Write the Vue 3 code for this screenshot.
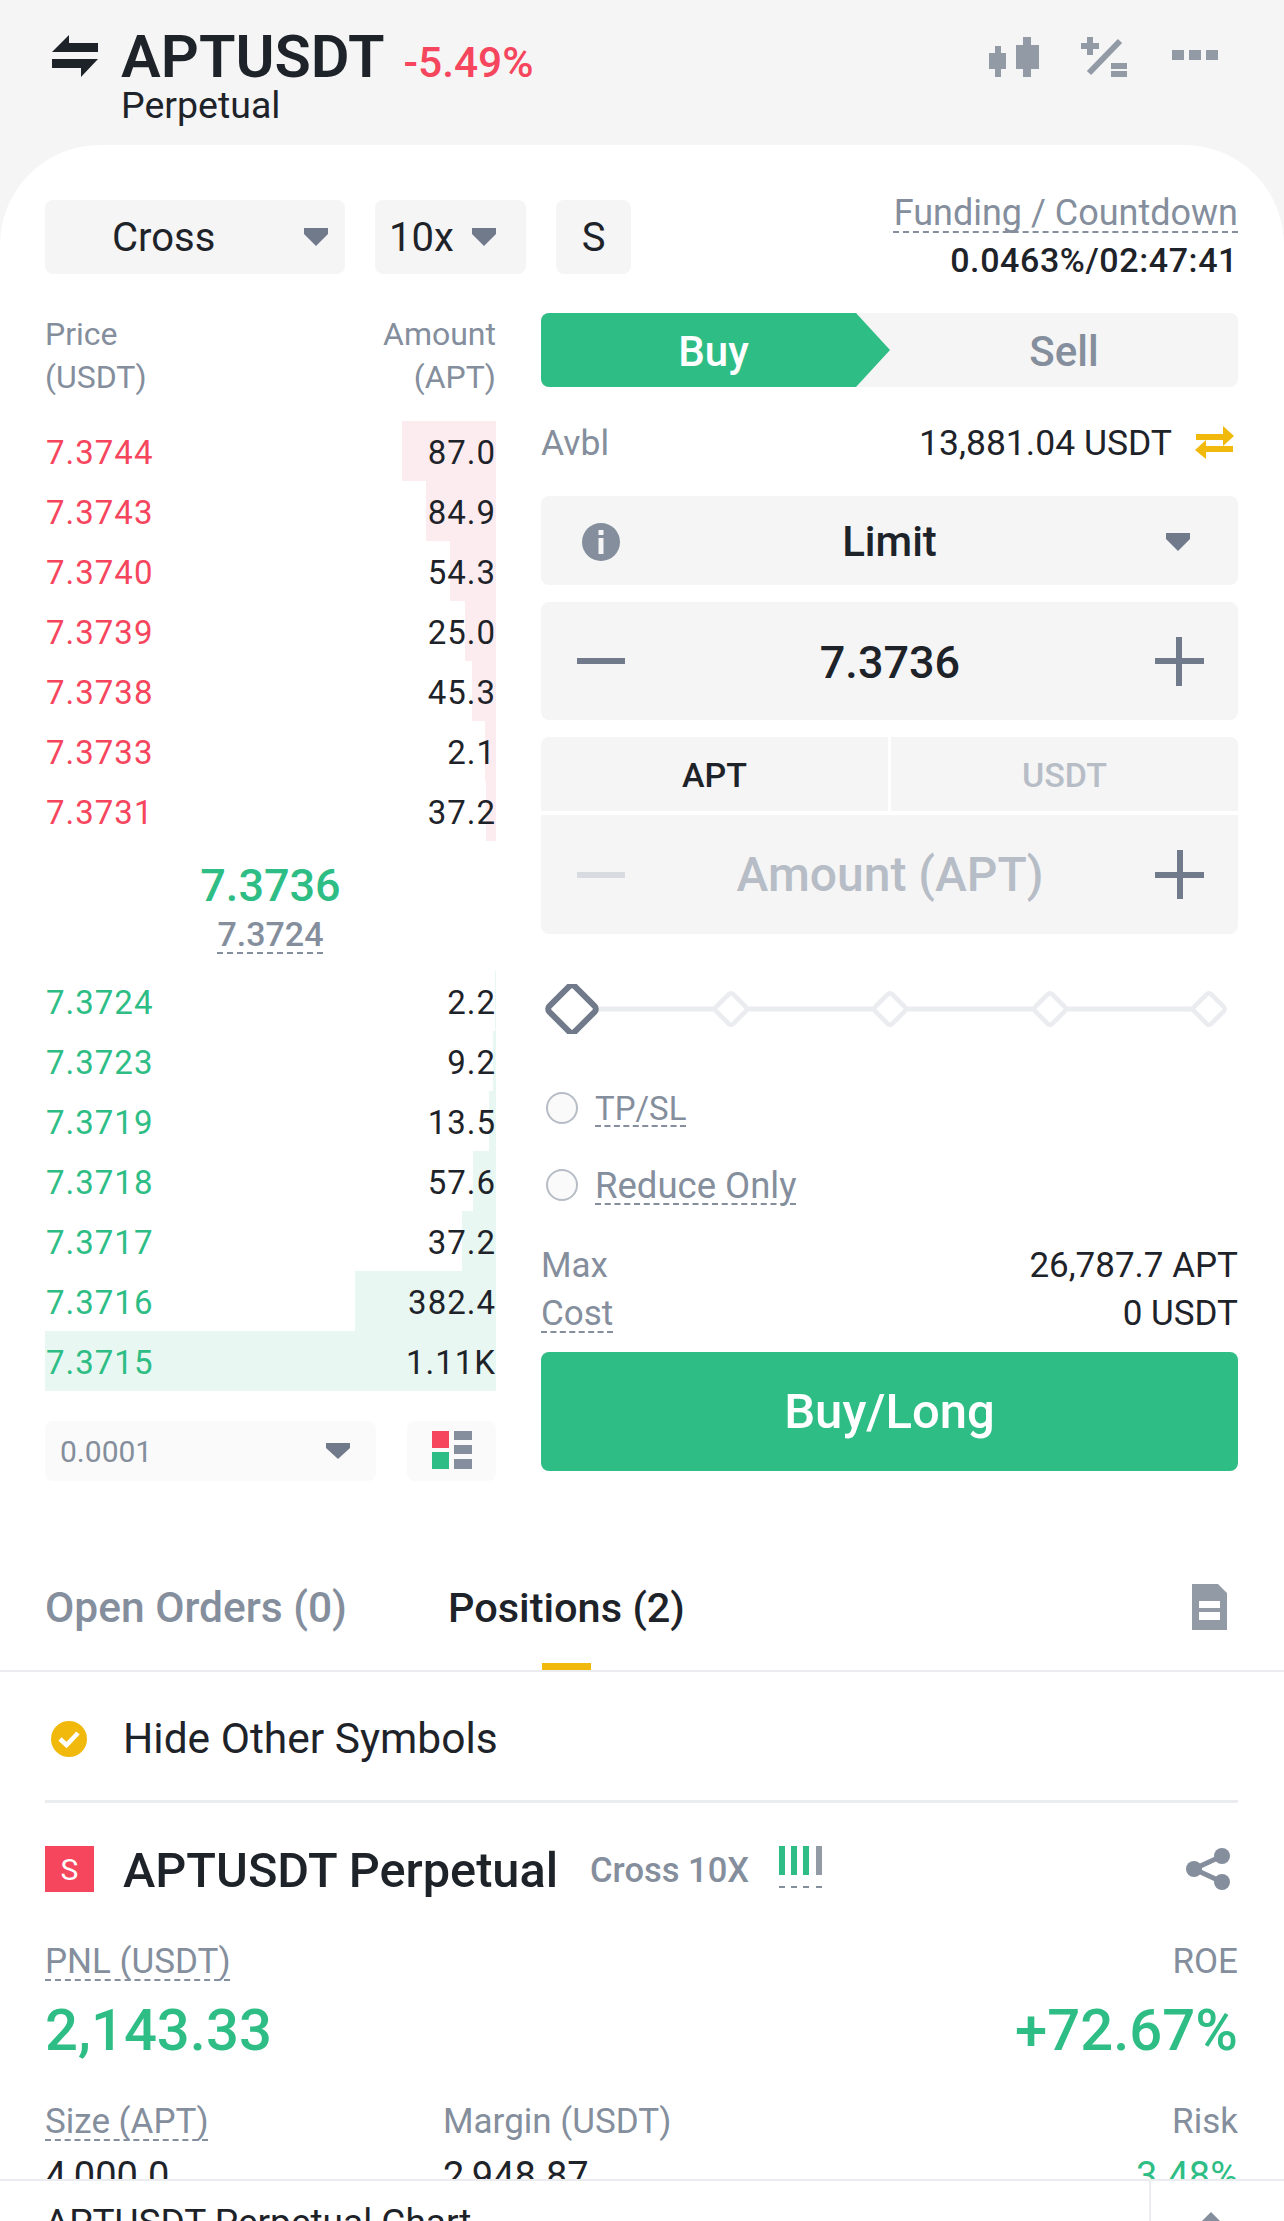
<template>
  <div class="page">
    <header class="top">
      <svg class="swap" viewBox="0 0 46 42" aria-hidden="true"><path d="M17 0v8h29v9H0zM0 24h46L29 42v-9H0z" fill="#1e2329"/></svg>
      <div class="symbol">
        <div class="symbol-row">
          <span class="symbol-name">APTUSDT</span>
          <span class="symbol-change">-5.49%</span>
        </div>
        <div class="symbol-sub">Perpetual</div>
      </div>
      <div class="top-icons">
        <svg class="candles" width="54" height="40" viewBox="0 0 50 40" aria-hidden="true"><path d="M6 9h6v7h5v16h-5v8H6v-8H0V16h6zM34 0h8v8h8v24h-8v8h-8v-8h-7V8h7z" fill="#929aa5"/></svg>
        <svg width="48" height="40" viewBox="0 0 46 40" aria-hidden="true"><path d="M6 0h6v6h6v6h-6v6H6v-6H0V6h6zM30 26h16v6H30zM30 34h16v6H30z" fill="#929aa5"/><path d="M39 4 8 36" stroke="#929aa5" stroke-width="6" fill="none"/></svg>
        <svg width="46" height="40" viewBox="0 0 46 40" aria-hidden="true"><path d="M0 13h12v10H0zM17 13h12v10H17zM34 13h12v10H34z" fill="#929aa5"/></svg>
      </div>
    </header>

    <main class="card">
      <div class="scroll">
        <div class="toolbar">
          <div class="pill pill-cross"><span>Cross</span><svg class="caret" viewBox="0 0 24 18" aria-hidden="true"><path d="M0 0h24v6L12 18 0 6z"/></svg></div>
          <div class="pill pill-lev"><span>10x</span><svg class="caret" viewBox="0 0 24 18" aria-hidden="true"><path d="M0 0h24v6L12 18 0 6z"/></svg></div>
          <div class="pill pill-s">S</div>
          <div class="funding">
            <div class="funding-label"><span class="dashed">Funding / Countdown</span></div>
            <div class="funding-value">0.0463%/02:47:41</div>
          </div>
        </div>

        <div class="trade">
          <section class="book">
            <div class="book-head">
              <div>Price<br />(USDT)</div>
              <div class="right">Amount<br />(APT)</div>
            </div>
            <div class="book-row" v-for="r in asks" :key="r.price">
              <i class="depth depth-ask" :style="{ width: r.depth + 'px' }"></i>
              <span class="price ask">{{ r.price }}</span>
              <span class="amount">{{ r.amount }}</span>
            </div>
            <div class="mid">
              <div class="mid-price">7.3736</div>
              <div class="mid-mark"><span class="dashed">7.3724</span></div>
            </div>
            <div class="book-row" v-for="r in bids" :key="r.price">
              <i class="depth depth-bid" :style="{ width: r.depth + 'px' }"></i>
              <span class="price bid">{{ r.price }}</span>
              <span class="amount">{{ r.amount }}</span>
            </div>
            <div class="book-foot">
              <div class="tick"><span>0.0001</span><svg class="caret wide" viewBox="0 0 24 16" aria-hidden="true"><path d="M0 0h24v5L12 16 0 5z"/></svg></div>
              <div class="layout-btn">
                <svg width="40" height="40" viewBox="0 0 40 40" aria-hidden="true">
                  <rect width="17" height="17" fill="#f6465d" />
                  <rect y="21" width="17" height="17" fill="#2ebd85" />
                  <path d="M22 0h18v9H22zM22 14h18v9H22zM22 28h18v10H22z" fill="#848e9c" />
                </svg>
              </div>
            </div>
          </section>

          <section class="form">
            <div class="side">
              <div class="side-buy">Buy</div>
              <div class="side-sell">Sell</div>
            </div>
            <div class="avbl">
              <span class="muted">Avbl</span>
              <span class="avbl-value">13,881.04 USDT</span>
              <svg width="39" height="34" viewBox="0 0 39 34" aria-hidden="true"><path d="M28 0l11 10-11 10v-6H1V8h27zM11 14v6h27v6H11v7L0 24z" fill="#f0b90b"/></svg>
            </div>
            <div class="field field-limit">
              <svg class="info" width="38" height="38" viewBox="0 0 38 38" aria-hidden="true"><circle cx="19" cy="19" r="19" fill="#848e9c"/><path d="M16.500 7h5v5h-5zM16.500 15h5v16h-5z" fill="#f5f5f5"/></svg>
              <span class="field-text">Limit</span>
              <svg class="caret" viewBox="0 0 24 18" aria-hidden="true"><path d="M0 0h24v6L12 18 0 6z"/></svg>
            </div>
            <div class="field field-step">
              <i class="minus"></i>
              <span class="field-text strong">7.3736</span>
              <i class="plus"></i>
            </div>
            <div class="unit">
              <div class="unit-on">APT</div>
              <div class="unit-off">USDT</div>
            </div>
            <div class="field field-step field-amount">
              <i class="minus off"></i>
              <span class="field-text placeholder">Amount (APT)</span>
              <i class="plus"></i>
            </div>
            <svg class="slider" viewBox="0 0 697 50" aria-hidden="true">
              <path d="M31 25H668" stroke="#eaecef" stroke-width="5" />
              <rect v-for="x in stops" :key="x" :x="x - 12" y="13" width="24" height="24" rx="3" fill="#fff" stroke="#eaecef" stroke-width="4.5" :transform="`rotate(45 ${x} 25)`" />
              <rect x="13" y="7" width="36" height="36" rx="4" fill="#fff" stroke="#707a8a" stroke-width="6" transform="rotate(45 31 25)" />
            </svg>
            <label class="check first"><i class="radio"></i><span class="dashed">TP/SL</span></label>
            <label class="check"><i class="radio"></i><span class="dashed">Reduce Only</span></label>
            <div class="totals">
              <div class="total"><span class="muted">Max</span><span>26,787.7 APT</span></div>
              <div class="total"><span class="muted dashed">Cost</span><span>0 USDT</span></div>
            </div>
            <div class="submit">Buy/Long</div>
          </section>
        </div>

        <nav class="tabs">
          <div class="tab">Open Orders (0)</div>
          <div class="tab active">Positions (2)</div>
          <svg class="doc" width="35" height="46" viewBox="0 0 35 46" aria-hidden="true"><path d="M0 0h26l9 9v37H0zM7 17v7h21v-7zM7 28v8h21v-8z" fill="#929aa5" fill-rule="evenodd"/></svg>
        </nav>

        <div class="positions">
          <div class="hide-row">
            <svg width="36" height="36" viewBox="0 0 36 36" aria-hidden="true"><circle cx="18" cy="18" r="18" fill="#f0b90b"/><path d="M9 18l6.500 6L27 12" fill="none" stroke="#fff" stroke-width="4.500"/></svg>
            <span>Hide Other Symbols</span>
          </div>

          <div class="pos-head">
            <div class="pos-badge">S</div>
            <div class="pos-name">APTUSDT Perpetual</div>
            <div class="pos-mode">Cross 10X</div>
            <svg class="pos-risk" width="44" height="44" viewBox="0 0 44 44" aria-hidden="true">
              <path d="M0 0h6v29H0zM12 0h6v29h-6zM24 0h6v29h-6z" fill="#2ebd85" />
              <path d="M37 0h6v29h-6z" fill="#929aa5" />
              <path d="M0 41h6M12 41h6M24 41h6M37 41h6" stroke="#848e9c" stroke-width="2" />
            </svg>
            <svg class="share" width="44" height="42" viewBox="0 0 44 42" aria-hidden="true">
              <path d="M36 8 8 21l28 13" fill="none" stroke="#848e9c" stroke-width="5" />
              <circle cx="36" cy="8" r="8" fill="#848e9c" /><circle cx="8" cy="21" r="8" fill="#848e9c" /><circle cx="36" cy="34" r="8" fill="#848e9c" />
            </svg>
          </div>

          <div class="pnl-labels">
            <span class="dashed">PNL (USDT)</span>
            <span>ROE</span>
          </div>
          <div class="pnl-values">
            <span>2,143.33</span>
            <span>+72.67%</span>
          </div>
          <div class="stats stats-labels">
            <span class="dashed">Size (APT)</span>
            <span>Margin (USDT)</span>
            <span class="right">Risk</span>
          </div>
          <div class="stats stats-values">
            <span>4,000.0</span>
            <span>2,948.87</span>
            <span class="right bid">3.48%</span>
          </div>
        </div>
      </div>

      <footer class="chart-bar">
        <div class="chart-title">APTUSDT Perpetual  Chart</div>
        <div class="chart-toggle">
          <svg width="36" height="18" viewBox="0 0 36 18" aria-hidden="true"><path d="M18 0l18 18H0z" fill="#848e9c"/></svg>
        </div>
      </footer>
    </main>
  </div>
</template>

<script setup>
const asks = [
  { price: '7.3744', amount: '87.0', depth: 94 },
  { price: '7.3743', amount: '84.9', depth: 70 },
  { price: '7.3740', amount: '54.3', depth: 46 },
  { price: '7.3739', amount: '25.0', depth: 31 },
  { price: '7.3738', amount: '45.3', depth: 24 },
  { price: '7.3733', amount: '2.1', depth: 11 },
  { price: '7.3731', amount: '37.2', depth: 10 }
]

const bids = [
  { price: '7.3724', amount: '2.2', depth: 1 },
  { price: '7.3723', amount: '9.2', depth: 3 },
  { price: '7.3719', amount: '13.5', depth: 7 },
  { price: '7.3718', amount: '57.6', depth: 23 },
  { price: '7.3717', amount: '37.2', depth: 34 },
  { price: '7.3716', amount: '382.4', depth: 141 },
  { price: '7.3715', amount: '1.11K', depth: 451 }
]

const stops = [190, 349, 509, 668]
</script>

<style>
html, body { margin: 0; background: #fff; }
</style>

<style scoped>
.page { height: 2221px; overflow: hidden; display: flex; flex-direction: column; background: #f5f5f5; color: #1e2329; font-family: Roboto, "Noto Sans", sans-serif; }
.dashed { text-decoration: underline dashed 2px #848e9c; text-underline-offset: 6px; text-decoration-skip-ink: none; }
.muted { color: #848e9c; }
.right { text-align: right; }
.caret { width: 24px; height: 18px; fill: #707a8a; flex: none; }

/* header */
.top { height: 145px; flex: none; box-sizing: border-box; padding: 34px 46px 0 52px; display: flex; align-items: flex-start; }
.swap { width: 46px; height: 42px; margin-top: 1px; flex: none; }
.symbol { margin-left: 23px; margin-top: -6px; }
.symbol-row { display: flex; align-items: baseline; height: 58px; }
.symbol-name { font-size: 59.5px; line-height: 58px; font-weight: 600; }
.symbol-change { font-size: 42.5px; font-weight: 500; color: #f6465d; margin-left: 19px; }
.symbol-sub { font-size: 37.5px; line-height: 38px; }
.top-icons { margin-left: auto; display: flex; gap: 44px; margin-right: 20px; margin-top: 3px; }
.candles { margin-right: -5px; }

.card { flex: 1; min-height: 0; display: flex; flex-direction: column; background: #fff; border-radius: 100px 100px 0 0; }
.scroll { flex: 1; min-height: 0; overflow: hidden; padding-top: 55px; }

/* top selects */
.toolbar { display: flex; height: 74px; padding: 0 46px 0 45px; gap: 30px; }
.pill { background: #f5f5f5; border-radius: 8px; display: flex; align-items: center; font-size: 40px; box-sizing: border-box; }
.pill-cross { width: 300px; padding: 0 17px 0 67px; justify-content: space-between; }
.pill-lev { width: 151px; padding: 0 30px 0 14px; justify-content: space-between; }
.pill-s { width: 75px; justify-content: center; }
.funding { margin-left: auto; text-align: right; margin-top: -10px; }
.funding-label { font-size: 36px; line-height: 46px; color: #848e9c; white-space: nowrap; }
.funding-value { font-size: 34px; line-height: 48px; font-weight: 500; white-space: nowrap; letter-spacing: 0.6px; }

.trade { display: grid; grid-template-columns: 451px 697px; column-gap: 45px; padding-left: 45px; margin-top: 39px; }

/* order book */
.book-head { display: flex; justify-content: space-between; font-size: 32px; line-height: 43px; color: #848e9c; margin-bottom: 22px; }
.book-row { position: relative; height: 60px; box-sizing: border-box; padding: 2px 0 0 1px; display: flex; justify-content: space-between; align-items: center; font-size: 33px; letter-spacing: 1px; }
.depth { position: absolute; right: 0; top: 0; bottom: 0; }
.depth-ask { background: #fcecef; }
.depth-bid { background: #e8f7f1; }
.price, .amount { position: relative; }
.ask { color: #f6465d; }
.bid { color: #2ebd85; }
.mid { height: 130px; box-sizing: border-box; padding-top: 20px; text-align: center; }
.mid-price { font-size: 45px; line-height: 50px; font-weight: 500; color: #2ebd85; }
.mid-mark { font-size: 34px; line-height: 46px; font-weight: 500; color: #848e9c; }
.book-foot { display: flex; justify-content: space-between; margin-top: 30px; height: 60px; }
.tick { width: 331px; box-sizing: border-box; padding: 0 26px 0 15px; background: #fafafa; border-radius: 8px; display: flex; align-items: center; justify-content: space-between; font-size: 30px; color: #848e9c; }
.caret.wide { height: 16px; }
.layout-btn { width: 89px; background: #fafafa; border-radius: 8px; display: flex; align-items: center; justify-content: center; }

/* order form */
.form { display: flex; flex-direction: column; }
.side { height: 74px; display: flex; background: #f5f5f5; border-radius: 8px; font-size: 42px; font-weight: 500; }
.side-buy { width: 349px; box-sizing: border-box; padding: 2px 4px 0 0; background: #2ebd85; color: #fff; display: flex; align-items: center; justify-content: center; border-radius: 8px 0 0 8px; clip-path: polygon(0 0, 315px 0, 349px 37px, 315px 74px, 0 74px); }
.side-sell { flex: 1; padding-top: 2px; color: #848e9c; display: flex; align-items: center; justify-content: center; }
.avbl { height: 109px; padding-top: 2px; box-sizing: border-box; display: flex; align-items: center; font-size: 35.5px; }
.avbl-value { margin-left: auto; margin-right: 23px; }
.avbl svg { margin-right: 4px; }
.field { background: #f5f5f5; border-radius: 8px; display: flex; align-items: center; justify-content: space-between; box-sizing: border-box; }
.field-limit { height: 89px; padding: 2px 48px 0; display: grid; grid-template-columns: 1fr auto 1fr; }
.field-limit .info { margin-left: -7px; }
.field-limit .caret { justify-self: end; }
.field-step { height: 118px; margin-top: 17px; padding: 0 34px 0 36px; }
.field-amount { height: 119px; margin-top: 4px; border-radius: 0 0 8px 8px; }
.field-text { font-size: 42px; font-weight: 500; }
.field-text.strong { font-size: 45px; padding-top: 3px; }
.field-text.placeholder { font-size: 48px; color: #b7bdc6; }
.minus { width: 48px; height: 6px; background: #707a8a; }
.minus.off { background: #d8dce1; }
.plus { width: 49px; height: 49px; background: linear-gradient(#707a8a, #707a8a) center / 100% 6px no-repeat, linear-gradient(#707a8a, #707a8a) center / 6px 100% no-repeat; }
.unit { height: 74px; margin-top: 17px; display: grid; grid-template-columns: 1fr 1fr; gap: 3px; font-size: 34px; font-weight: 500; }
.unit > div { background: #f5f5f5; display: flex; align-items: center; justify-content: center; padding-top: 2px; }
.unit-on { border-radius: 8px 0 0 0; }
.unit-off { border-radius: 0 8px 0 0; color: #b7bdc6; }
.slider { display: block; width: 697px; height: 50px; margin-top: 50px; }
.check { height: 60px; display: flex; align-items: center; font-size: 36.5px; color: #848e9c; margin-top: 17px; }
.check.first { margin-top: 44px; font-size: 33px; }
.radio { width: 32px; height: 32px; box-sizing: border-box; border-radius: 50%; border: 2px solid #b7bdc6; background: #fafafa; margin: 0 17px 0 5px; }
.totals { margin-top: 25px; padding-top: 1px; }
.total { display: flex; justify-content: space-between; font-size: 35px; line-height: 49px; }
.total:last-child { margin-top: -1px; }
.submit { height: 119px; margin-top: 14px; background: #2ebd85; border-radius: 8px; color: #fff; font-size: 49px; font-weight: 500; display: flex; align-items: center; justify-content: center; }

/* positions */
.tabs { margin-top: 100px; height: 91px; box-sizing: border-box; border-bottom: 2px solid #eaecef; padding: 0 57px 0 45px; display: flex; align-items: flex-start; gap: 101px; font-size: 42.5px; font-weight: 500; line-height: 54px; }
.tab { color: #848e9c; white-space: nowrap; position: relative; height: 89px; }
.tab.active { color: #1e2329; font-size: 41.5px; }
.tab.active::after { content: ""; position: absolute; left: 50%; bottom: 0; width: 49px; height: 7px; margin-left: -24px; background: #f0b90b; }
.doc { margin-left: auto; margin-top: 3px; }
.positions { padding: 0 46px 0 45px; }
.hide-row { height: 131px; box-sizing: border-box; padding: 5px 0 0 6px; border-bottom: 3px solid #eaecef; display: flex; align-items: center; gap: 36px; font-size: 42.5px; }
.pos-head { display: flex; align-items: center; height: 46px; margin-top: 43px; }
.pos-badge { width: 49px; height: 46px; background: #f6465d; color: #fff; font-size: 30px; display: flex; align-items: center; justify-content: center; }
.pos-name { margin-left: 29px; padding-top: 3px; font-size: 48.7px; font-weight: 500; white-space: nowrap; }
.pos-mode { margin-left: 32px; padding-top: 2px; font-size: 34.5px; font-weight: 500; color: #848e9c; }
.pos-risk { margin-left: 30px; align-self: flex-start; }
.share { margin-left: auto; margin-right: 8px; }
.pnl-labels { display: flex; justify-content: space-between; margin-top: 47px; font-size: 35px; line-height: 46px; color: #848e9c; }
.pnl-values { display: flex; justify-content: space-between; margin-top: 10px; font-size: 58px; line-height: 70px; font-weight: 500; color: #2ebd85; }
.stats { display: grid; grid-template-columns: 398px 1fr auto; }
.stats-labels { margin-top: 34px; font-size: 35px; line-height: 46px; color: #848e9c; }
.stats-values { margin-top: 6px; font-size: 38px; line-height: 50px; }

.chart-bar { height: 42px; flex: none; box-sizing: border-box; border-top: 2px solid #eaecef; background: #fff; display: flex; overflow: hidden; }
.chart-title { flex: 1; padding: 19px 0 0 45px; font-size: 37px; line-height: 46px; white-space: pre; }
.chart-toggle { width: 135px; box-sizing: border-box; border-left: 2px solid #eaecef; display: flex; justify-content: center; padding: 31px 14px 0 0; }
</style>
